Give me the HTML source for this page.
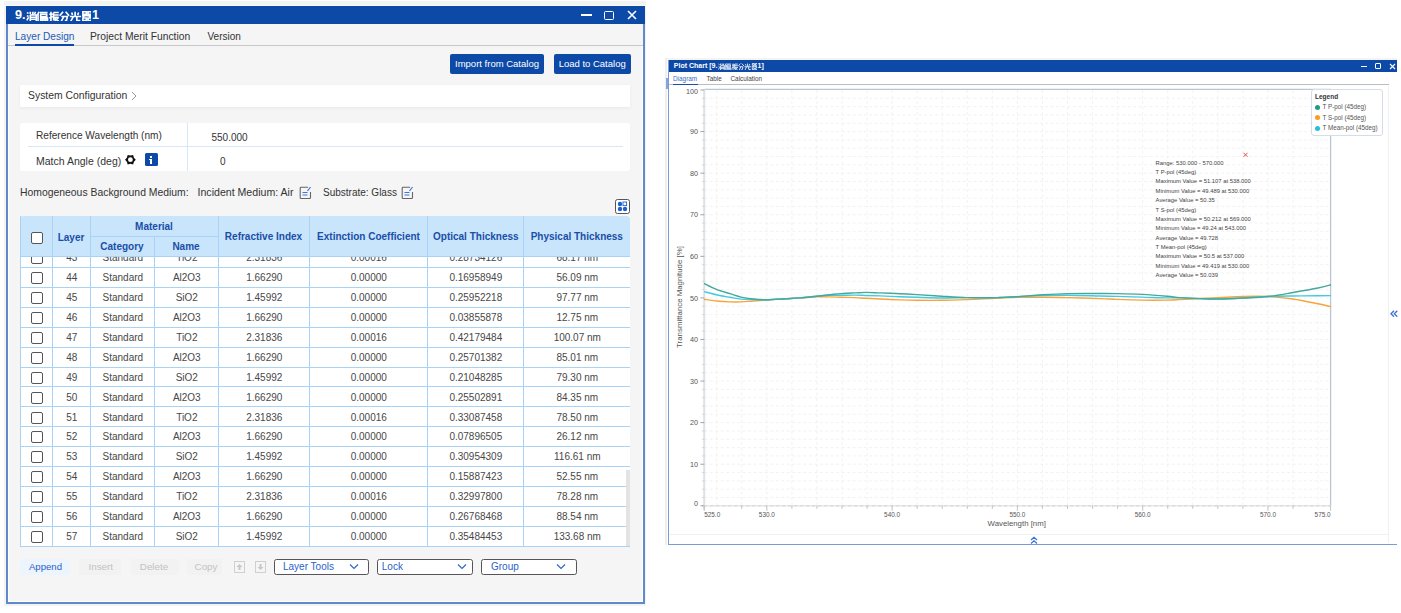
<!DOCTYPE html><html><head><meta charset="utf-8"><style>
*{box-sizing:border-box}
html,body{margin:0;padding:0}
body{width:1401px;height:613px;position:relative;overflow:hidden;background:#fff;font-family:"Liberation Sans",sans-serif;color:#333}
.cb{position:absolute;width:12px;height:12px;border:1.6px solid #555;border-radius:2px;background:#fff}
</style></head><body>
<div style="position:absolute;left:4px;top:1px;width:642px;height:605px;background:#f3f3f3"></div>
<div style="position:absolute;left:4px;top:4.6px;width:642px;height:1px;background:#fafafa"></div>
<div style="position:absolute;left:6px;top:6px;width:639px;height:598.2px;background:#f5f5f5;border:2px solid #6088cc;box-shadow:inset 0 0 0 1px #fff"></div>
<div style="position:absolute;left:6px;top:6px;width:638.5px;height:17.8px;background:#0d4aa8"></div>
<div style="position:absolute;left:15px;top:6.3px;white-space:nowrap;font-weight:bold;font-size:12.6px;line-height:18px;color:#fff">9.</div>
<svg style="position:absolute;left:25.5px;top:10.5px" width="65.5" height="10.2" viewBox="0 0 76 13" preserveAspectRatio="none" fill="none" stroke="#fff" stroke-width="1.9"><path d="M1 2l2 1M1 6l2 1M1 12l2-4M5 1v3M8 1v3M11 1l-1 3M5 5h7v8M5 5v8M5 8h7M5 10.5h7"/><path d="M15 1l-2 5M14 4v9M16 2h9M17 4h7v3h-7zM17 4v9M17 9h8v4M19 9v4M21 9v4M23 9v4"/><path d="M27 4h4M29 1v11l-1 1M27 9l4-2M32 2h6M32 2v10M32 5h6M33 8h5M34 8v5M38 8l-3 3l3 2"/><path d="M43 1l-4 5M46 1l4 5M41 7h7l-1 5h-2M44 7l-3 6"/><path d="M57 1v6M53 2l1 3M61 2l-1 3M51 7h13M55 7l-3 6M59 7v5h4"/><path d="M66 1h4v3h-4zM72 1h4v3h-4zM65 6h11M70 4l-4 4M71 5l4 3M66 9h4v3h-4zM72 9h4v3h-4z"/></svg>
<div style="position:absolute;left:92px;top:6.3px;white-space:nowrap;font-weight:bold;font-size:12.6px;line-height:18px;color:#fff">1</div>
<div style="position:absolute;left:581px;top:14px;width:11px;height:1.6px;background:#fff"></div>
<div style="position:absolute;left:604px;top:10.5px;width:10px;height:9.5px;border:1.6px solid #fff;border-radius:1.5px"></div>
<svg style="position:absolute;left:627px;top:10px" width="10" height="10"><path d="M1 1L9 9M9 1L1 9" stroke="#fff" stroke-width="1.6"/></svg>
<div style="position:absolute;left:7.5px;top:24px;width:635px;height:21.5px;background:#f5f5f5"></div>
<div style="position:absolute;left:7.5px;top:45px;width:635px;height:1px;background:#c9c9c9"></div>
<div style="position:absolute;left:15px;top:30.8px;white-space:nowrap;font-size:10.1px;color:#1f5bb8;line-height:12px">Layer Design</div>
<div style="position:absolute;left:15px;top:44px;width:59px;height:2px;background:#0d4aa8"></div>
<div style="position:absolute;left:90px;top:30.8px;white-space:nowrap;font-size:10.3px;color:#333;line-height:12px">Project Merit Function</div>
<div style="position:absolute;left:207.5px;top:30.8px;white-space:nowrap;font-size:10px;color:#333;line-height:12px">Version</div>
<div style="position:absolute;left:450px;top:54px;width:94px;height:20px;background:#0d4aa8;border-radius:2px"></div>
<div style="position:absolute;left:347px;top:54px;width:300px;height:20px;line-height:20px;text-align:center;white-space:nowrap;font-size:9.5px;color:#fff">Import from Catalog</div>
<div style="position:absolute;left:553.5px;top:54px;width:77.5px;height:20px;background:#0d4aa8;border-radius:2px"></div>
<div style="position:absolute;left:442.20000000000005px;top:54px;width:300px;height:20px;line-height:20px;text-align:center;white-space:nowrap;font-size:9.5px;color:#fff">Load to Catalog</div>
<div style="position:absolute;left:20px;top:85px;width:610px;height:22px;background:#fff;box-shadow:0 1px 3px rgba(0,0,0,0.06)"></div>
<div style="position:absolute;left:28px;top:89px;white-space:nowrap;font-size:10.4px;color:#333;line-height:14px">System Configuration</div>
<svg style="position:absolute;left:131px;top:91px" width="6" height="10"><path d="M1 1l4 4l-4 4" stroke="#999" stroke-width="1" fill="none"/></svg>
<div style="position:absolute;left:20px;top:123px;width:610px;height:47.5px;background:#fff;border-radius:3px"></div>
<div style="position:absolute;left:28px;top:146px;width:594.5px;height:1px;background:#d3e8fb"></div>
<div style="position:absolute;left:186.5px;top:123px;width:1px;height:47.5px;background:#d3e8fb"></div>
<div style="position:absolute;left:36px;top:130px;white-space:nowrap;font-size:10.1px;color:#333;line-height:12px">Reference Wavelength (nm)</div>
<div style="position:absolute;left:211.5px;top:132px;white-space:nowrap;font-size:10px;color:#333;line-height:12px">550.000</div>
<div style="position:absolute;left:36px;top:154.5px;white-space:nowrap;font-size:10.5px;color:#333;line-height:12px">Match Angle (deg)</div>
<div style="position:absolute;left:220px;top:156px;white-space:nowrap;font-size:10px;color:#333;line-height:12px">0</div>
<svg style="position:absolute;left:0;top:0" width="170" height="170"><path d="M135.80 159.70L133.95 161.75L133.10 164.38L130.40 163.80L127.70 164.38L126.85 161.75L125.00 159.70L126.85 157.65L127.70 155.02L130.40 155.60L133.10 155.02L133.95 157.65Z" fill="#111"/><circle cx="130.4" cy="159.7" r="2.4" fill="#fff"/></svg>
<div style="position:absolute;left:145px;top:153.2px;width:12.5px;height:12.7px;background:#0d4aa8;border-radius:1.5px"></div>
<div style="position:absolute;left:150.3px;top:156px;width:2px;height:2px;background:#fff"></div>
<div style="position:absolute;left:150.3px;top:159.3px;width:2px;height:5px;background:#fff"></div>
<div style="position:absolute;left:149.3px;top:159.3px;width:1.2px;height:1px;background:#fff"></div>
<div style="position:absolute;left:20px;top:186px;white-space:nowrap;font-size:10.4px;color:#333;line-height:13px">Homogeneous Background Medium:</div>
<div style="position:absolute;left:197.5px;top:186px;white-space:nowrap;font-size:10.6px;color:#333;line-height:13px">Incident Medium: Air</div>
<svg style="position:absolute;left:299px;top:185.5px" width="13" height="13" viewBox="0 0 13 13" fill="none"><path d="M9 1.2H2.2a1 1 0 0 0-1 1v9.3a1 1 0 0 0 1 1h8.3a1 1 0 0 0 1-1V6" stroke="#666" stroke-width="1.1"/><path d="M3.5 6.5h5M3.5 9h5" stroke="#3a78d8" stroke-width="1.1"/><path d="M8.5 5l3-4" stroke="#3a78d8" stroke-width="1.2"/></svg>
<div style="position:absolute;left:323px;top:186px;white-space:nowrap;font-size:10px;color:#333;line-height:13px">Substrate: Glass</div>
<svg style="position:absolute;left:401px;top:185.5px" width="13" height="13" viewBox="0 0 13 13" fill="none"><path d="M9 1.2H2.2a1 1 0 0 0-1 1v9.3a1 1 0 0 0 1 1h8.3a1 1 0 0 0 1-1V6" stroke="#666" stroke-width="1.1"/><path d="M3.5 6.5h5M3.5 9h5" stroke="#3a78d8" stroke-width="1.1"/><path d="M8.5 5l3-4" stroke="#3a78d8" stroke-width="1.2"/></svg>
<div style="position:absolute;left:614.5px;top:198.5px;width:15px;height:15px;border:1.3px solid #555;border-radius:2.5px;background:#fff"></div>
<svg style="position:absolute;left:614.5px;top:198.5px" width="15" height="15"><circle cx="5" cy="5" r="2.2" fill="#1f5fd0"/><rect x="8" y="3" width="3.6" height="3.6" fill="none" stroke="#1f5fd0" stroke-width="0.9"/><circle cx="5" cy="10" r="2.2" fill="#1f5fd0"/><circle cx="10" cy="10" r="2.2" fill="#1f5fd0"/></svg>
<div style="position:absolute;left:20px;top:216px;width:610px;height:330px;background:#fff"></div>
<div style="position:absolute;left:20px;top:256px;width:610px;height:290px;overflow:hidden">
<div style="position:absolute;left:0px;top:10.999999999999993px;width:610px;height:1px;background:#a9d2f7"></div>
<div class="cb" style="left:10.5px;top:-3.6500000000000066px"></div>
<div style="position:absolute;left:-98.2px;top:-7.650000000000007px;width:300px;height:20px;line-height:20px;text-align:center;white-space:nowrap;font-size:10px;color:#484848">43</div>
<div style="position:absolute;left:-47.2px;top:-7.650000000000007px;width:300px;height:20px;line-height:20px;text-align:center;white-space:nowrap;font-size:10px;color:#484848">Standard</div>
<div style="position:absolute;left:16.80000000000001px;top:-7.650000000000007px;width:300px;height:20px;line-height:20px;text-align:center;white-space:nowrap;font-size:10px;color:#484848">TiO2</div>
<div style="position:absolute;left:94.30000000000001px;top:-7.650000000000007px;width:300px;height:20px;line-height:20px;text-align:center;white-space:nowrap;font-size:10px;color:#484848">2.31836</div>
<div style="position:absolute;left:198.8px;top:-7.650000000000007px;width:300px;height:20px;line-height:20px;text-align:center;white-space:nowrap;font-size:10px;color:#484848">0.00016</div>
<div style="position:absolute;left:305.8px;top:-7.650000000000007px;width:300px;height:20px;line-height:20px;text-align:center;white-space:nowrap;font-size:10px;color:#484848">0.28734126</div>
<div style="position:absolute;left:407.29999999999995px;top:-7.650000000000007px;width:300px;height:20px;line-height:20px;text-align:center;white-space:nowrap;font-size:10px;color:#484848">68.17 nm</div>
<div style="position:absolute;left:0px;top:30.9px;width:610px;height:1px;background:#a9d2f7"></div>
<div class="cb" style="left:10.5px;top:16.25px"></div>
<div style="position:absolute;left:-98.2px;top:12.25px;width:300px;height:20px;line-height:20px;text-align:center;white-space:nowrap;font-size:10px;color:#484848">44</div>
<div style="position:absolute;left:-47.2px;top:12.25px;width:300px;height:20px;line-height:20px;text-align:center;white-space:nowrap;font-size:10px;color:#484848">Standard</div>
<div style="position:absolute;left:16.80000000000001px;top:12.25px;width:300px;height:20px;line-height:20px;text-align:center;white-space:nowrap;font-size:10px;color:#484848">Al2O3</div>
<div style="position:absolute;left:94.30000000000001px;top:12.25px;width:300px;height:20px;line-height:20px;text-align:center;white-space:nowrap;font-size:10px;color:#484848">1.66290</div>
<div style="position:absolute;left:198.8px;top:12.25px;width:300px;height:20px;line-height:20px;text-align:center;white-space:nowrap;font-size:10px;color:#484848">0.00000</div>
<div style="position:absolute;left:305.8px;top:12.25px;width:300px;height:20px;line-height:20px;text-align:center;white-space:nowrap;font-size:10px;color:#484848">0.16958949</div>
<div style="position:absolute;left:407.29999999999995px;top:12.25px;width:300px;height:20px;line-height:20px;text-align:center;white-space:nowrap;font-size:10px;color:#484848">56.09 nm</div>
<div style="position:absolute;left:0px;top:50.799999999999976px;width:610px;height:1px;background:#a9d2f7"></div>
<div class="cb" style="left:10.5px;top:36.14999999999998px"></div>
<div style="position:absolute;left:-98.2px;top:32.14999999999998px;width:300px;height:20px;line-height:20px;text-align:center;white-space:nowrap;font-size:10px;color:#484848">45</div>
<div style="position:absolute;left:-47.2px;top:32.14999999999998px;width:300px;height:20px;line-height:20px;text-align:center;white-space:nowrap;font-size:10px;color:#484848">Standard</div>
<div style="position:absolute;left:16.80000000000001px;top:32.14999999999998px;width:300px;height:20px;line-height:20px;text-align:center;white-space:nowrap;font-size:10px;color:#484848">SiO2</div>
<div style="position:absolute;left:94.30000000000001px;top:32.14999999999998px;width:300px;height:20px;line-height:20px;text-align:center;white-space:nowrap;font-size:10px;color:#484848">1.45992</div>
<div style="position:absolute;left:198.8px;top:32.14999999999998px;width:300px;height:20px;line-height:20px;text-align:center;white-space:nowrap;font-size:10px;color:#484848">0.00000</div>
<div style="position:absolute;left:305.8px;top:32.14999999999998px;width:300px;height:20px;line-height:20px;text-align:center;white-space:nowrap;font-size:10px;color:#484848">0.25952218</div>
<div style="position:absolute;left:407.29999999999995px;top:32.14999999999998px;width:300px;height:20px;line-height:20px;text-align:center;white-space:nowrap;font-size:10px;color:#484848">97.77 nm</div>
<div style="position:absolute;left:0px;top:70.70000000000002px;width:610px;height:1px;background:#a9d2f7"></div>
<div class="cb" style="left:10.5px;top:56.05000000000001px"></div>
<div style="position:absolute;left:-98.2px;top:52.05000000000001px;width:300px;height:20px;line-height:20px;text-align:center;white-space:nowrap;font-size:10px;color:#484848">46</div>
<div style="position:absolute;left:-47.2px;top:52.05000000000001px;width:300px;height:20px;line-height:20px;text-align:center;white-space:nowrap;font-size:10px;color:#484848">Standard</div>
<div style="position:absolute;left:16.80000000000001px;top:52.05000000000001px;width:300px;height:20px;line-height:20px;text-align:center;white-space:nowrap;font-size:10px;color:#484848">Al2O3</div>
<div style="position:absolute;left:94.30000000000001px;top:52.05000000000001px;width:300px;height:20px;line-height:20px;text-align:center;white-space:nowrap;font-size:10px;color:#484848">1.66290</div>
<div style="position:absolute;left:198.8px;top:52.05000000000001px;width:300px;height:20px;line-height:20px;text-align:center;white-space:nowrap;font-size:10px;color:#484848">0.00000</div>
<div style="position:absolute;left:305.8px;top:52.05000000000001px;width:300px;height:20px;line-height:20px;text-align:center;white-space:nowrap;font-size:10px;color:#484848">0.03855878</div>
<div style="position:absolute;left:407.29999999999995px;top:52.05000000000001px;width:300px;height:20px;line-height:20px;text-align:center;white-space:nowrap;font-size:10px;color:#484848">12.75 nm</div>
<div style="position:absolute;left:0px;top:90.6px;width:610px;height:1px;background:#a9d2f7"></div>
<div class="cb" style="left:10.5px;top:75.94999999999999px"></div>
<div style="position:absolute;left:-98.2px;top:71.94999999999999px;width:300px;height:20px;line-height:20px;text-align:center;white-space:nowrap;font-size:10px;color:#484848">47</div>
<div style="position:absolute;left:-47.2px;top:71.94999999999999px;width:300px;height:20px;line-height:20px;text-align:center;white-space:nowrap;font-size:10px;color:#484848">Standard</div>
<div style="position:absolute;left:16.80000000000001px;top:71.94999999999999px;width:300px;height:20px;line-height:20px;text-align:center;white-space:nowrap;font-size:10px;color:#484848">TiO2</div>
<div style="position:absolute;left:94.30000000000001px;top:71.94999999999999px;width:300px;height:20px;line-height:20px;text-align:center;white-space:nowrap;font-size:10px;color:#484848">2.31836</div>
<div style="position:absolute;left:198.8px;top:71.94999999999999px;width:300px;height:20px;line-height:20px;text-align:center;white-space:nowrap;font-size:10px;color:#484848">0.00016</div>
<div style="position:absolute;left:305.8px;top:71.94999999999999px;width:300px;height:20px;line-height:20px;text-align:center;white-space:nowrap;font-size:10px;color:#484848">0.42179484</div>
<div style="position:absolute;left:407.29999999999995px;top:71.94999999999999px;width:300px;height:20px;line-height:20px;text-align:center;white-space:nowrap;font-size:10px;color:#484848">100.07 nm</div>
<div style="position:absolute;left:0px;top:110.50000000000003px;width:610px;height:1px;background:#a9d2f7"></div>
<div class="cb" style="left:10.5px;top:95.85000000000002px"></div>
<div style="position:absolute;left:-98.2px;top:91.85000000000002px;width:300px;height:20px;line-height:20px;text-align:center;white-space:nowrap;font-size:10px;color:#484848">48</div>
<div style="position:absolute;left:-47.2px;top:91.85000000000002px;width:300px;height:20px;line-height:20px;text-align:center;white-space:nowrap;font-size:10px;color:#484848">Standard</div>
<div style="position:absolute;left:16.80000000000001px;top:91.85000000000002px;width:300px;height:20px;line-height:20px;text-align:center;white-space:nowrap;font-size:10px;color:#484848">Al2O3</div>
<div style="position:absolute;left:94.30000000000001px;top:91.85000000000002px;width:300px;height:20px;line-height:20px;text-align:center;white-space:nowrap;font-size:10px;color:#484848">1.66290</div>
<div style="position:absolute;left:198.8px;top:91.85000000000002px;width:300px;height:20px;line-height:20px;text-align:center;white-space:nowrap;font-size:10px;color:#484848">0.00000</div>
<div style="position:absolute;left:305.8px;top:91.85000000000002px;width:300px;height:20px;line-height:20px;text-align:center;white-space:nowrap;font-size:10px;color:#484848">0.25701382</div>
<div style="position:absolute;left:407.29999999999995px;top:91.85000000000002px;width:300px;height:20px;line-height:20px;text-align:center;white-space:nowrap;font-size:10px;color:#484848">85.01 nm</div>
<div style="position:absolute;left:0px;top:130.4px;width:610px;height:1px;background:#a9d2f7"></div>
<div class="cb" style="left:10.5px;top:115.75px"></div>
<div style="position:absolute;left:-98.2px;top:111.75px;width:300px;height:20px;line-height:20px;text-align:center;white-space:nowrap;font-size:10px;color:#484848">49</div>
<div style="position:absolute;left:-47.2px;top:111.75px;width:300px;height:20px;line-height:20px;text-align:center;white-space:nowrap;font-size:10px;color:#484848">Standard</div>
<div style="position:absolute;left:16.80000000000001px;top:111.75px;width:300px;height:20px;line-height:20px;text-align:center;white-space:nowrap;font-size:10px;color:#484848">SiO2</div>
<div style="position:absolute;left:94.30000000000001px;top:111.75px;width:300px;height:20px;line-height:20px;text-align:center;white-space:nowrap;font-size:10px;color:#484848">1.45992</div>
<div style="position:absolute;left:198.8px;top:111.75px;width:300px;height:20px;line-height:20px;text-align:center;white-space:nowrap;font-size:10px;color:#484848">0.00000</div>
<div style="position:absolute;left:305.8px;top:111.75px;width:300px;height:20px;line-height:20px;text-align:center;white-space:nowrap;font-size:10px;color:#484848">0.21048285</div>
<div style="position:absolute;left:407.29999999999995px;top:111.75px;width:300px;height:20px;line-height:20px;text-align:center;white-space:nowrap;font-size:10px;color:#484848">79.30 nm</div>
<div style="position:absolute;left:0px;top:150.29999999999998px;width:610px;height:1px;background:#a9d2f7"></div>
<div class="cb" style="left:10.5px;top:135.64999999999998px"></div>
<div style="position:absolute;left:-98.2px;top:131.64999999999998px;width:300px;height:20px;line-height:20px;text-align:center;white-space:nowrap;font-size:10px;color:#484848">50</div>
<div style="position:absolute;left:-47.2px;top:131.64999999999998px;width:300px;height:20px;line-height:20px;text-align:center;white-space:nowrap;font-size:10px;color:#484848">Standard</div>
<div style="position:absolute;left:16.80000000000001px;top:131.64999999999998px;width:300px;height:20px;line-height:20px;text-align:center;white-space:nowrap;font-size:10px;color:#484848">Al2O3</div>
<div style="position:absolute;left:94.30000000000001px;top:131.64999999999998px;width:300px;height:20px;line-height:20px;text-align:center;white-space:nowrap;font-size:10px;color:#484848">1.66290</div>
<div style="position:absolute;left:198.8px;top:131.64999999999998px;width:300px;height:20px;line-height:20px;text-align:center;white-space:nowrap;font-size:10px;color:#484848">0.00000</div>
<div style="position:absolute;left:305.8px;top:131.64999999999998px;width:300px;height:20px;line-height:20px;text-align:center;white-space:nowrap;font-size:10px;color:#484848">0.25502891</div>
<div style="position:absolute;left:407.29999999999995px;top:131.64999999999998px;width:300px;height:20px;line-height:20px;text-align:center;white-space:nowrap;font-size:10px;color:#484848">84.35 nm</div>
<div style="position:absolute;left:0px;top:170.19999999999996px;width:610px;height:1px;background:#a9d2f7"></div>
<div class="cb" style="left:10.5px;top:155.54999999999995px"></div>
<div style="position:absolute;left:-98.2px;top:151.54999999999995px;width:300px;height:20px;line-height:20px;text-align:center;white-space:nowrap;font-size:10px;color:#484848">51</div>
<div style="position:absolute;left:-47.2px;top:151.54999999999995px;width:300px;height:20px;line-height:20px;text-align:center;white-space:nowrap;font-size:10px;color:#484848">Standard</div>
<div style="position:absolute;left:16.80000000000001px;top:151.54999999999995px;width:300px;height:20px;line-height:20px;text-align:center;white-space:nowrap;font-size:10px;color:#484848">TiO2</div>
<div style="position:absolute;left:94.30000000000001px;top:151.54999999999995px;width:300px;height:20px;line-height:20px;text-align:center;white-space:nowrap;font-size:10px;color:#484848">2.31836</div>
<div style="position:absolute;left:198.8px;top:151.54999999999995px;width:300px;height:20px;line-height:20px;text-align:center;white-space:nowrap;font-size:10px;color:#484848">0.00016</div>
<div style="position:absolute;left:305.8px;top:151.54999999999995px;width:300px;height:20px;line-height:20px;text-align:center;white-space:nowrap;font-size:10px;color:#484848">0.33087458</div>
<div style="position:absolute;left:407.29999999999995px;top:151.54999999999995px;width:300px;height:20px;line-height:20px;text-align:center;white-space:nowrap;font-size:10px;color:#484848">78.50 nm</div>
<div style="position:absolute;left:0px;top:190.1px;width:610px;height:1px;background:#a9d2f7"></div>
<div class="cb" style="left:10.5px;top:175.45px"></div>
<div style="position:absolute;left:-98.2px;top:171.45px;width:300px;height:20px;line-height:20px;text-align:center;white-space:nowrap;font-size:10px;color:#484848">52</div>
<div style="position:absolute;left:-47.2px;top:171.45px;width:300px;height:20px;line-height:20px;text-align:center;white-space:nowrap;font-size:10px;color:#484848">Standard</div>
<div style="position:absolute;left:16.80000000000001px;top:171.45px;width:300px;height:20px;line-height:20px;text-align:center;white-space:nowrap;font-size:10px;color:#484848">Al2O3</div>
<div style="position:absolute;left:94.30000000000001px;top:171.45px;width:300px;height:20px;line-height:20px;text-align:center;white-space:nowrap;font-size:10px;color:#484848">1.66290</div>
<div style="position:absolute;left:198.8px;top:171.45px;width:300px;height:20px;line-height:20px;text-align:center;white-space:nowrap;font-size:10px;color:#484848">0.00000</div>
<div style="position:absolute;left:305.8px;top:171.45px;width:300px;height:20px;line-height:20px;text-align:center;white-space:nowrap;font-size:10px;color:#484848">0.07896505</div>
<div style="position:absolute;left:407.29999999999995px;top:171.45px;width:300px;height:20px;line-height:20px;text-align:center;white-space:nowrap;font-size:10px;color:#484848">26.12 nm</div>
<div style="position:absolute;left:0px;top:210.00000000000003px;width:610px;height:1px;background:#a9d2f7"></div>
<div class="cb" style="left:10.5px;top:195.35000000000002px"></div>
<div style="position:absolute;left:-98.2px;top:191.35000000000002px;width:300px;height:20px;line-height:20px;text-align:center;white-space:nowrap;font-size:10px;color:#484848">53</div>
<div style="position:absolute;left:-47.2px;top:191.35000000000002px;width:300px;height:20px;line-height:20px;text-align:center;white-space:nowrap;font-size:10px;color:#484848">Standard</div>
<div style="position:absolute;left:16.80000000000001px;top:191.35000000000002px;width:300px;height:20px;line-height:20px;text-align:center;white-space:nowrap;font-size:10px;color:#484848">SiO2</div>
<div style="position:absolute;left:94.30000000000001px;top:191.35000000000002px;width:300px;height:20px;line-height:20px;text-align:center;white-space:nowrap;font-size:10px;color:#484848">1.45992</div>
<div style="position:absolute;left:198.8px;top:191.35000000000002px;width:300px;height:20px;line-height:20px;text-align:center;white-space:nowrap;font-size:10px;color:#484848">0.00000</div>
<div style="position:absolute;left:305.8px;top:191.35000000000002px;width:300px;height:20px;line-height:20px;text-align:center;white-space:nowrap;font-size:10px;color:#484848">0.30954309</div>
<div style="position:absolute;left:407.29999999999995px;top:191.35000000000002px;width:300px;height:20px;line-height:20px;text-align:center;white-space:nowrap;font-size:10px;color:#484848">116.61 nm</div>
<div style="position:absolute;left:0px;top:229.9px;width:610px;height:1px;background:#a9d2f7"></div>
<div class="cb" style="left:10.5px;top:215.25px"></div>
<div style="position:absolute;left:-98.2px;top:211.25px;width:300px;height:20px;line-height:20px;text-align:center;white-space:nowrap;font-size:10px;color:#484848">54</div>
<div style="position:absolute;left:-47.2px;top:211.25px;width:300px;height:20px;line-height:20px;text-align:center;white-space:nowrap;font-size:10px;color:#484848">Standard</div>
<div style="position:absolute;left:16.80000000000001px;top:211.25px;width:300px;height:20px;line-height:20px;text-align:center;white-space:nowrap;font-size:10px;color:#484848">Al2O3</div>
<div style="position:absolute;left:94.30000000000001px;top:211.25px;width:300px;height:20px;line-height:20px;text-align:center;white-space:nowrap;font-size:10px;color:#484848">1.66290</div>
<div style="position:absolute;left:198.8px;top:211.25px;width:300px;height:20px;line-height:20px;text-align:center;white-space:nowrap;font-size:10px;color:#484848">0.00000</div>
<div style="position:absolute;left:305.8px;top:211.25px;width:300px;height:20px;line-height:20px;text-align:center;white-space:nowrap;font-size:10px;color:#484848">0.15887423</div>
<div style="position:absolute;left:407.29999999999995px;top:211.25px;width:300px;height:20px;line-height:20px;text-align:center;white-space:nowrap;font-size:10px;color:#484848">52.55 nm</div>
<div style="position:absolute;left:0px;top:249.79999999999998px;width:610px;height:1px;background:#a9d2f7"></div>
<div class="cb" style="left:10.5px;top:235.14999999999998px"></div>
<div style="position:absolute;left:-98.2px;top:231.14999999999998px;width:300px;height:20px;line-height:20px;text-align:center;white-space:nowrap;font-size:10px;color:#484848">55</div>
<div style="position:absolute;left:-47.2px;top:231.14999999999998px;width:300px;height:20px;line-height:20px;text-align:center;white-space:nowrap;font-size:10px;color:#484848">Standard</div>
<div style="position:absolute;left:16.80000000000001px;top:231.14999999999998px;width:300px;height:20px;line-height:20px;text-align:center;white-space:nowrap;font-size:10px;color:#484848">TiO2</div>
<div style="position:absolute;left:94.30000000000001px;top:231.14999999999998px;width:300px;height:20px;line-height:20px;text-align:center;white-space:nowrap;font-size:10px;color:#484848">2.31836</div>
<div style="position:absolute;left:198.8px;top:231.14999999999998px;width:300px;height:20px;line-height:20px;text-align:center;white-space:nowrap;font-size:10px;color:#484848">0.00016</div>
<div style="position:absolute;left:305.8px;top:231.14999999999998px;width:300px;height:20px;line-height:20px;text-align:center;white-space:nowrap;font-size:10px;color:#484848">0.32997800</div>
<div style="position:absolute;left:407.29999999999995px;top:231.14999999999998px;width:300px;height:20px;line-height:20px;text-align:center;white-space:nowrap;font-size:10px;color:#484848">78.28 nm</div>
<div style="position:absolute;left:0px;top:269.69999999999993px;width:610px;height:1px;background:#a9d2f7"></div>
<div class="cb" style="left:10.5px;top:255.04999999999995px"></div>
<div style="position:absolute;left:-98.2px;top:251.04999999999995px;width:300px;height:20px;line-height:20px;text-align:center;white-space:nowrap;font-size:10px;color:#484848">56</div>
<div style="position:absolute;left:-47.2px;top:251.04999999999995px;width:300px;height:20px;line-height:20px;text-align:center;white-space:nowrap;font-size:10px;color:#484848">Standard</div>
<div style="position:absolute;left:16.80000000000001px;top:251.04999999999995px;width:300px;height:20px;line-height:20px;text-align:center;white-space:nowrap;font-size:10px;color:#484848">Al2O3</div>
<div style="position:absolute;left:94.30000000000001px;top:251.04999999999995px;width:300px;height:20px;line-height:20px;text-align:center;white-space:nowrap;font-size:10px;color:#484848">1.66290</div>
<div style="position:absolute;left:198.8px;top:251.04999999999995px;width:300px;height:20px;line-height:20px;text-align:center;white-space:nowrap;font-size:10px;color:#484848">0.00000</div>
<div style="position:absolute;left:305.8px;top:251.04999999999995px;width:300px;height:20px;line-height:20px;text-align:center;white-space:nowrap;font-size:10px;color:#484848">0.26768468</div>
<div style="position:absolute;left:407.29999999999995px;top:251.04999999999995px;width:300px;height:20px;line-height:20px;text-align:center;white-space:nowrap;font-size:10px;color:#484848">88.54 nm</div>
<div style="position:absolute;left:0px;top:289.6px;width:610px;height:1px;background:#a9d2f7"></div>
<div class="cb" style="left:10.5px;top:274.95000000000005px"></div>
<div style="position:absolute;left:-98.2px;top:270.95000000000005px;width:300px;height:20px;line-height:20px;text-align:center;white-space:nowrap;font-size:10px;color:#484848">57</div>
<div style="position:absolute;left:-47.2px;top:270.95000000000005px;width:300px;height:20px;line-height:20px;text-align:center;white-space:nowrap;font-size:10px;color:#484848">Standard</div>
<div style="position:absolute;left:16.80000000000001px;top:270.95000000000005px;width:300px;height:20px;line-height:20px;text-align:center;white-space:nowrap;font-size:10px;color:#484848">SiO2</div>
<div style="position:absolute;left:94.30000000000001px;top:270.95000000000005px;width:300px;height:20px;line-height:20px;text-align:center;white-space:nowrap;font-size:10px;color:#484848">1.45992</div>
<div style="position:absolute;left:198.8px;top:270.95000000000005px;width:300px;height:20px;line-height:20px;text-align:center;white-space:nowrap;font-size:10px;color:#484848">0.00000</div>
<div style="position:absolute;left:305.8px;top:270.95000000000005px;width:300px;height:20px;line-height:20px;text-align:center;white-space:nowrap;font-size:10px;color:#484848">0.35484453</div>
<div style="position:absolute;left:407.29999999999995px;top:270.95000000000005px;width:300px;height:20px;line-height:20px;text-align:center;white-space:nowrap;font-size:10px;color:#484848">133.68 nm</div>
</div>
<div style="position:absolute;left:20px;top:216px;width:610px;height:40px;background:#c8e5fb;border-radius:3px 3px 0 0"></div>
<div style="position:absolute;left:20px;top:255.5px;width:610px;height:1.2px;background:#a9d2f7"></div>
<div style="position:absolute;left:90px;top:235.5px;width:128px;height:1px;background:#a9d2f7"></div>
<div style="position:absolute;left:52px;top:216px;width:1px;height:330px;background:#a9d2f7"></div>
<div style="position:absolute;left:90px;top:216px;width:1px;height:330px;background:#a9d2f7"></div>
<div style="position:absolute;left:154px;top:235.5px;width:1px;height:310.5px;background:#a9d2f7"></div>
<div style="position:absolute;left:218px;top:216px;width:1px;height:330px;background:#a9d2f7"></div>
<div style="position:absolute;left:309px;top:216px;width:1px;height:330px;background:#a9d2f7"></div>
<div style="position:absolute;left:427px;top:216px;width:1px;height:330px;background:#a9d2f7"></div>
<div style="position:absolute;left:523px;top:216px;width:1px;height:330px;background:#a9d2f7"></div>
<div style="position:absolute;left:20px;top:216px;width:1px;height:330px;background:#a9d2f7"></div>
<div style="position:absolute;left:20px;top:545.5px;width:610px;height:1px;background:#a9d2f7"></div>
<div class="cb" style="left:30.5px;top:231.5px"></div>
<div style="position:absolute;left:-79px;top:228px;width:300px;height:20px;line-height:20px;text-align:center;white-space:nowrap;font-size:10px;font-weight:bold;color:#1a4ea8">Layer</div>
<div style="position:absolute;left:4px;top:216.5px;width:300px;height:20px;line-height:20px;text-align:center;white-space:nowrap;font-size:10px;font-weight:bold;color:#1a4ea8">Material</div>
<div style="position:absolute;left:-28px;top:236.5px;width:300px;height:20px;line-height:20px;text-align:center;white-space:nowrap;font-size:10px;font-weight:bold;color:#1a4ea8">Category</div>
<div style="position:absolute;left:36px;top:236.5px;width:300px;height:20px;line-height:20px;text-align:center;white-space:nowrap;font-size:10px;font-weight:bold;color:#1a4ea8">Name</div>
<div style="position:absolute;left:113.5px;top:227px;width:300px;height:20px;line-height:20px;text-align:center;white-space:nowrap;font-size:10px;font-weight:bold;color:#1a4ea8">Refractive Index</div>
<div style="position:absolute;left:218.5px;top:227px;width:300px;height:20px;line-height:20px;text-align:center;white-space:nowrap;font-size:10px;font-weight:bold;color:#1a4ea8">Extinction Coefficient</div>
<div style="position:absolute;left:325.8px;top:227px;width:300px;height:20px;line-height:20px;text-align:center;white-space:nowrap;font-size:10px;font-weight:bold;color:#1a4ea8">Optical Thickness</div>
<div style="position:absolute;left:426.79999999999995px;top:227px;width:300px;height:20px;line-height:20px;text-align:center;white-space:nowrap;font-size:10px;font-weight:bold;color:#1a4ea8">Physical Thickness</div>
<div style="position:absolute;left:625.5px;top:469.5px;width:4.5px;height:76px;background:#e3e3e3"></div>
<div style="position:absolute;left:19.5px;top:559px;width:50.5px;height:15.5px;background:#ecf4fd;border-radius:2px"></div>
<div style="position:absolute;left:-104.5px;top:556.5px;width:300px;height:20px;line-height:20px;text-align:center;white-space:nowrap;font-size:9.6px;color:#2a62c9">Append</div>
<div style="position:absolute;left:79px;top:559px;width:42px;height:15.5px;background:#f2f2f2;border-radius:2px"></div>
<div style="position:absolute;left:131px;top:559px;width:48px;height:15.5px;background:#f2f2f2;border-radius:2px"></div>
<div style="position:absolute;left:187px;top:559px;width:35px;height:15.5px;background:#f2f2f2;border-radius:2px"></div>
<div style="position:absolute;left:-49.2px;top:556.5px;width:300px;height:20px;line-height:20px;text-align:center;white-space:nowrap;font-size:9.8px;color:#c2c2c2">Insert</div>
<div style="position:absolute;left:4px;top:556.5px;width:300px;height:20px;line-height:20px;text-align:center;white-space:nowrap;font-size:9.8px;color:#c2c2c2">Delete</div>
<div style="position:absolute;left:56px;top:556.5px;width:300px;height:20px;line-height:20px;text-align:center;white-space:nowrap;font-size:9.8px;color:#c2c2c2">Copy</div>
<svg style="position:absolute;left:233.5px;top:560.5px" width="11" height="12" viewBox="0 0 11 12"><rect x="0.5" y="0.5" width="10" height="11" fill="none" stroke="#d0d0d0"/><path d="M5.5 3l-3 3h2v3h2V6h2z" fill="#c8c8c8"/></svg>
<svg style="position:absolute;left:254.5px;top:560.5px" width="11" height="12" viewBox="0 0 11 12"><rect x="0.5" y="0.5" width="10" height="11" fill="none" stroke="#d0d0d0"/><path d="M5.5 9l-3-3h2V3h2v3h2z" fill="#c8c8c8"/></svg>
<div style="position:absolute;left:273.5px;top:558.5px;width:95.5px;height:16px;border:1.2px solid #555;border-radius:2.5px;background:#fff"></div><div style="position:absolute;left:283.0px;top:561px;white-space:nowrap;font-size:10px;color:#2a62c9;line-height:12px">Layer Tools</div><svg style="position:absolute;left:348.6px;top:563px" width="10" height="7"><path d="M1 1.5l4 4l4-4" stroke="#2a62c9" stroke-width="1.1" fill="none"/></svg>
<div style="position:absolute;left:377px;top:558.5px;width:95.5px;height:16px;border:1.2px solid #555;border-radius:2.5px;background:#fff"></div><div style="position:absolute;left:381.8px;top:561px;white-space:nowrap;font-size:10px;color:#2a62c9;line-height:12px">Lock</div><svg style="position:absolute;left:457.2px;top:563px" width="10" height="7"><path d="M1 1.5l4 4l4-4" stroke="#2a62c9" stroke-width="1.1" fill="none"/></svg>
<div style="position:absolute;left:481px;top:558.5px;width:95.5px;height:16px;border:1.2px solid #555;border-radius:2.5px;background:#fff"></div><div style="position:absolute;left:491px;top:561px;white-space:nowrap;font-size:10px;color:#2a62c9;line-height:12px">Group</div><svg style="position:absolute;left:556px;top:563px" width="10" height="7"><path d="M1 1.5l4 4l4-4" stroke="#2a62c9" stroke-width="1.1" fill="none"/></svg>
<div style="position:absolute;left:666px;top:58px;width:731px;height:3px;background:#f4f4f4"></div>
<div style="position:absolute;left:665.3px;top:58px;width:2.2px;height:487px;background:#efefef"></div>
<div style="position:absolute;left:668px;top:60.3px;width:729px;height:484.7px;background:#fff"></div>
<div style="position:absolute;left:668px;top:60.3px;width:729px;height:11.3px;background:#0d4aa8"></div>
<div style="position:absolute;left:667.5px;top:60.3px;width:1.3px;height:484.5px;background:#7a9bd6"></div>
<div style="position:absolute;left:667.5px;top:543.8px;width:729.5px;height:1.3px;background:#7a9bd6"></div>
<div style="position:absolute;left:665.8px;top:78px;width:1.8px;height:10.5px;background:#8aa4d8"></div>
<div style="position:absolute;left:673.8px;top:61px;white-space:nowrap;font-weight:bold;font-size:7px;line-height:10.6px;color:#fff">Plot Chart [9.</div>
<svg style="position:absolute;left:717.8px;top:62.8px" width="39.5" height="7" viewBox="0 0 76 13" preserveAspectRatio="none" fill="none" stroke="#fff" stroke-width="1.6"><path d="M1 2l2 1M1 6l2 1M1 12l2-4M5 1v3M8 1v3M11 1l-1 3M5 5h7v8M5 5v8M5 8h7M5 10.5h7"/><path d="M15 1l-2 5M14 4v9M16 2h9M17 4h7v3h-7zM17 4v9M17 9h8v4M19 9v4M21 9v4M23 9v4"/><path d="M27 4h4M29 1v11l-1 1M27 9l4-2M32 2h6M32 2v10M32 5h6M33 8h5M34 8v5M38 8l-3 3l3 2"/><path d="M43 1l-4 5M46 1l4 5M41 7h7l-1 5h-2M44 7l-3 6"/><path d="M57 1v6M53 2l1 3M61 2l-1 3M51 7h13M55 7l-3 6M59 7v5h4"/><path d="M66 1h4v3h-4zM72 1h4v3h-4zM65 6h11M70 4l-4 4M71 5l4 3M66 9h4v3h-4zM72 9h4v3h-4z"/></svg>
<div style="position:absolute;left:757.6px;top:61px;white-space:nowrap;font-weight:bold;font-size:7px;line-height:10.6px;color:#fff">1]</div>
<div style="position:absolute;left:1360.7px;top:65.5px;width:6px;height:1.2px;background:#fff"></div>
<div style="position:absolute;left:1374.8px;top:62.8px;width:6.2px;height:6.4px;border:1.1px solid #fff;border-radius:1px"></div>
<svg style="position:absolute;left:1388.5px;top:62.5px" width="7" height="7"><path d="M1 1L6 6M6 1L1 6" stroke="#fff" stroke-width="1.1"/></svg>
<div style="position:absolute;left:673px;top:74.6px;white-space:nowrap;font-size:6.4px;color:#3b6cc4;line-height:8px">Diagram</div>
<div style="position:absolute;left:706.5px;top:74.6px;white-space:nowrap;font-size:6.4px;color:#444;line-height:8px">Table</div>
<div style="position:absolute;left:730.5px;top:74.6px;white-space:nowrap;font-size:6.4px;color:#444;line-height:8px">Calculation</div>
<div style="position:absolute;left:669px;top:84px;width:720px;height:0.9px;background:#bdbdbd"></div>
<div style="position:absolute;left:673px;top:83.8px;width:24.5px;height:1.6px;background:#1a4ea8"></div>
<div style="position:absolute;left:1388.4px;top:86px;width:0.8px;height:457px;background:#f0f0f0"></div>
<div style="position:absolute;left:669px;top:534px;width:720px;height:0.8px;background:#f0f0f0"></div>
<svg style="position:absolute;left:0;top:0" width="1401" height="613" viewBox="0 0 1401 613">
<path d="M704.2 497.48H1330.6M704.2 489.17H1330.6M704.2 480.85H1330.6M704.2 472.54H1330.6M704.2 464.22H1330.6M704.2 455.90H1330.6M704.2 447.59H1330.6M704.2 439.27H1330.6M704.2 430.96H1330.6M704.2 422.64H1330.6M704.2 414.32H1330.6M704.2 406.01H1330.6M704.2 397.69H1330.6M704.2 389.38H1330.6M704.2 381.06H1330.6M704.2 372.74H1330.6M704.2 364.43H1330.6M704.2 356.11H1330.6M704.2 347.80H1330.6M704.2 339.48H1330.6M704.2 331.16H1330.6M704.2 322.85H1330.6M704.2 314.53H1330.6M704.2 306.22H1330.6M704.2 297.90H1330.6M704.2 289.58H1330.6M704.2 281.27H1330.6M704.2 272.95H1330.6M704.2 264.64H1330.6M704.2 256.32H1330.6M704.2 248.00H1330.6M704.2 239.69H1330.6M704.2 231.37H1330.6M704.2 223.06H1330.6M704.2 214.74H1330.6M704.2 206.42H1330.6M704.2 198.11H1330.6M704.2 189.79H1330.6M704.2 181.48H1330.6M704.2 173.16H1330.6M704.2 164.84H1330.6M704.2 156.53H1330.6M704.2 148.21H1330.6M704.2 139.90H1330.6M704.2 131.58H1330.6M704.2 123.26H1330.6M704.2 114.95H1330.6M704.2 106.63H1330.6M704.2 98.32H1330.6" stroke="#efefef" stroke-width="0.8" stroke-dasharray="3 2.5" fill="none"/>
<path d="M716.73 90.0V505.8M741.78 90.0V505.8M766.84 90.0V505.8M791.90 90.0V505.8M816.95 90.0V505.8M842.01 90.0V505.8M867.06 90.0V505.8M892.12 90.0V505.8M917.18 90.0V505.8M942.23 90.0V505.8M967.29 90.0V505.8M992.34 90.0V505.8M1017.40 90.0V505.8M1042.46 90.0V505.8M1067.51 90.0V505.8M1092.57 90.0V505.8M1117.62 90.0V505.8M1142.68 90.0V505.8M1167.74 90.0V505.8M1192.79 90.0V505.8M1217.85 90.0V505.8M1242.90 90.0V505.8M1267.96 90.0V505.8M1293.02 90.0V505.8M1318.07 90.0V505.8" stroke="#efefef" stroke-width="0.8" stroke-dasharray="3 2.5" fill="none"/>
<path d="M704.2 89.4H1330.6V505.8" stroke="#b9c6d3" stroke-width="1.3" fill="none"/>
<path d="M704.2 89.0V509.8" stroke="#dde1e7" stroke-width="2" fill="none"/>
<path d="M702.2 505.8H1330.6" stroke="#e2e2e2" stroke-width="1.3" fill="none"/>
<path d="M704.2 505.8H1330.6" stroke="#d2d2d2" stroke-width="0.9" fill="none" stroke-dasharray="3 3"/>
<path d="M700.4000000000001 505.80H704.2M700.4000000000001 464.22H704.2M700.4000000000001 422.64H704.2M700.4000000000001 381.06H704.2M700.4000000000001 339.48H704.2M700.4000000000001 297.90H704.2M700.4000000000001 256.32H704.2M700.4000000000001 214.74H704.2M700.4000000000001 173.16H704.2M700.4000000000001 131.58H704.2M700.4000000000001 90.00H704.2" stroke="#9a9a9a" stroke-width="0.9" fill="none"/>
<path d="M702.0 497.48H704.2M702.0 489.17H704.2M702.0 480.85H704.2M702.0 472.54H704.2M702.0 455.90H704.2M702.0 447.59H704.2M702.0 439.27H704.2M702.0 430.96H704.2M702.0 414.32H704.2M702.0 406.01H704.2M702.0 397.69H704.2M702.0 389.38H704.2M702.0 372.74H704.2M702.0 364.43H704.2M702.0 356.11H704.2M702.0 347.80H704.2M702.0 331.16H704.2M702.0 322.85H704.2M702.0 314.53H704.2M702.0 306.22H704.2M702.0 289.58H704.2M702.0 281.27H704.2M702.0 272.95H704.2M702.0 264.64H704.2M702.0 248.00H704.2M702.0 239.69H704.2M702.0 231.37H704.2M702.0 223.06H704.2M702.0 206.42H704.2M702.0 198.11H704.2M702.0 189.79H704.2M702.0 181.48H704.2M702.0 164.84H704.2M702.0 156.53H704.2M702.0 148.21H704.2M702.0 139.90H704.2M702.0 123.26H704.2M702.0 114.95H704.2M702.0 106.63H704.2M702.0 98.32H704.2" stroke="#cfcfcf" stroke-width="0.8" fill="none"/>
<path d="M704.20 505.8V510.8M766.84 505.8V510.8M892.12 505.8V510.8M1017.40 505.8V510.8M1142.68 505.8V510.8M1267.96 505.8V510.8M1330.60 505.8V510.8M741.78 505.8V508.8M791.90 505.8V508.8M816.95 505.8V508.8M842.01 505.8V508.8M867.06 505.8V508.8M917.18 505.8V508.8M942.23 505.8V508.8M967.29 505.8V508.8M992.34 505.8V508.8M1042.46 505.8V508.8M1067.51 505.8V508.8M1092.57 505.8V508.8M1117.62 505.8V508.8M1167.74 505.8V508.8M1192.79 505.8V508.8M1217.85 505.8V508.8M1242.90 505.8V508.8M1293.02 505.8V508.8" stroke="#bbb" stroke-width="0.9" fill="none"/>
</svg>
<div style="position:absolute;left:670px;top:498.80px;width:28px;height:10px;line-height:10px;text-align:right;font-size:7.2px;color:#555">0</div>
<div style="position:absolute;left:670px;top:459.82px;width:28px;height:10px;line-height:10px;text-align:right;font-size:7.2px;color:#555">10</div>
<div style="position:absolute;left:670px;top:418.24px;width:28px;height:10px;line-height:10px;text-align:right;font-size:7.2px;color:#555">20</div>
<div style="position:absolute;left:670px;top:376.66px;width:28px;height:10px;line-height:10px;text-align:right;font-size:7.2px;color:#555">30</div>
<div style="position:absolute;left:670px;top:335.08px;width:28px;height:10px;line-height:10px;text-align:right;font-size:7.2px;color:#555">40</div>
<div style="position:absolute;left:670px;top:293.50px;width:28px;height:10px;line-height:10px;text-align:right;font-size:7.2px;color:#555">50</div>
<div style="position:absolute;left:670px;top:251.92px;width:28px;height:10px;line-height:10px;text-align:right;font-size:7.2px;color:#555">60</div>
<div style="position:absolute;left:670px;top:210.34px;width:28px;height:10px;line-height:10px;text-align:right;font-size:7.2px;color:#555">70</div>
<div style="position:absolute;left:670px;top:168.76px;width:28px;height:10px;line-height:10px;text-align:right;font-size:7.2px;color:#555">80</div>
<div style="position:absolute;left:670px;top:127.18px;width:28px;height:10px;line-height:10px;text-align:right;font-size:7.2px;color:#555">90</div>
<div style="position:absolute;left:670px;top:86.50px;width:28px;height:10px;line-height:10px;text-align:right;font-size:7.2px;color:#555">100</div>
<div style="position:absolute;left:704.2px;top:509.5px;white-space:nowrap;font-size:6.4px;color:#555;line-height:10px">525.0</div>
<div style="position:absolute;left:616.84px;top:504.5px;width:300px;height:20px;line-height:20px;text-align:center;white-space:nowrap;font-size:6.4px;color:#555">530.0</div>
<div style="position:absolute;left:742.12px;top:504.5px;width:300px;height:20px;line-height:20px;text-align:center;white-space:nowrap;font-size:6.4px;color:#555">540.0</div>
<div style="position:absolute;left:867.4px;top:504.5px;width:300px;height:20px;line-height:20px;text-align:center;white-space:nowrap;font-size:6.4px;color:#555">550.0</div>
<div style="position:absolute;left:992.6799999999998px;top:504.5px;width:300px;height:20px;line-height:20px;text-align:center;white-space:nowrap;font-size:6.4px;color:#555">560.0</div>
<div style="position:absolute;left:1117.96px;top:504.5px;width:300px;height:20px;line-height:20px;text-align:center;white-space:nowrap;font-size:6.4px;color:#555">570.0</div>
<div style="position:absolute;left:1290.60px;top:509.5px;width:40px;text-align:right;font-size:6.4px;color:#555;line-height:10px">575.0</div>
<div style="position:absolute;left:866.7px;top:513.7px;width:300px;height:20px;line-height:20px;text-align:center;white-space:nowrap;font-size:7.8px;color:#555">Wavelength [nm]</div>
<div style="position:absolute;left:619.8px;top:291.8px;width:120px;height:10px;line-height:10px;text-align:center;font-size:7.85px;color:#555;transform:rotate(-90deg)">Transmittance Magnitude [%]</div>
<svg style="position:absolute;left:0;top:0" width="1401" height="613"><path d="M704 299.3C706.08 299.58 712.17 300.57 716.5 301C720.83 301.43 725.92 301.75 730 301.9C734.08 302.05 737.17 302.05 741 301.9C744.83 301.75 748.83 301.30 753 301C757.17 300.70 760.50 300.50 766 300.1C771.50 299.70 780.33 298.97 786 298.6C791.67 298.23 794.90 298.18 800 297.9C805.10 297.62 811.60 297.07 816.6 296.9C821.60 296.73 825.93 296.83 830 296.9C834.07 296.97 836.83 297.18 841 297.3C845.17 297.42 850.83 297.43 855 297.6C859.17 297.77 861.83 298.07 866 298.3C870.17 298.53 874.33 298.73 880 299C885.67 299.27 893.83 299.68 900 299.9C906.17 300.12 910.08 300.23 917 300.3C923.92 300.37 933.17 300.42 941.5 300.3C949.83 300.18 958.92 299.88 967 299.6C975.08 299.32 984.50 298.85 990 298.6C995.50 298.35 995.50 298.32 1000 298.1C1004.50 297.88 1010.00 297.43 1017 297.3C1024.00 297.17 1033.67 297.25 1042 297.3C1050.33 297.35 1057.33 297.38 1067 297.6C1076.67 297.82 1091.67 298.30 1100 298.6C1108.33 298.90 1110.00 299.15 1117 299.4C1124.00 299.65 1133.67 299.98 1142 300.1C1150.33 300.22 1160.67 300.18 1167 300.1C1173.33 300.02 1174.50 299.87 1180 299.6C1185.50 299.33 1193.67 298.80 1200 298.5C1206.33 298.20 1210.83 298.13 1218 297.8C1225.17 297.47 1234.67 296.72 1243 296.5C1251.33 296.28 1259.67 296.08 1268 296.5C1276.33 296.92 1284.67 297.78 1293 299C1301.33 300.22 1311.67 302.50 1318 303.8C1324.33 305.10 1328.83 306.30 1331 306.8" stroke="#f7a43b" stroke-width="1.4" fill="none"/><path d="M704 291.6C706.08 292.13 712.17 293.85 716.5 294.8C720.83 295.75 725.92 296.58 730 297.3C734.08 298.02 737.17 298.72 741 299.1C744.83 299.48 748.83 299.48 753 299.6C757.17 299.72 760.50 299.95 766 299.8C771.50 299.65 780.33 299.02 786 298.7C791.67 298.38 794.90 298.32 800 297.9C805.10 297.48 811.60 296.63 816.6 296.2C821.60 295.77 825.93 295.45 830 295.3C834.07 295.15 836.83 295.33 841 295.3C845.17 295.27 850.83 295.07 855 295.1C859.17 295.13 861.83 295.37 866 295.5C870.17 295.63 874.33 295.70 880 295.9C885.67 296.10 893.83 296.47 900 296.7C906.17 296.93 910.08 297.08 917 297.3C923.92 297.52 933.17 297.95 941.5 298C949.83 298.05 958.92 297.63 967 297.6C975.08 297.57 984.50 297.82 990 297.8C995.50 297.78 995.50 297.68 1000 297.5C1004.50 297.32 1010.00 297.03 1017 296.7C1024.00 296.37 1033.67 295.73 1042 295.5C1050.33 295.27 1057.33 295.22 1067 295.3C1076.67 295.38 1091.67 295.82 1100 296C1108.33 296.18 1110.00 296.22 1117 296.4C1124.00 296.58 1133.67 296.85 1142 297.1C1150.33 297.35 1160.67 297.78 1167 297.9C1173.33 298.02 1174.50 297.68 1180 297.8C1185.50 297.92 1193.67 298.40 1200 298.6C1206.33 298.80 1210.83 299.10 1218 299C1225.17 298.90 1234.67 298.42 1243 298C1251.33 297.58 1259.67 296.83 1268 296.5C1276.33 296.17 1284.67 296.12 1293 296C1301.33 295.88 1311.67 295.87 1318 295.8C1324.33 295.73 1328.83 295.63 1331 295.6" stroke="#45c9e1" stroke-width="1.4" fill="none"/><path d="M704 283.4C706.08 284.40 712.17 287.68 716.5 289.4C720.83 291.12 725.92 292.42 730 293.7C734.08 294.98 737.67 296.28 741 297.1C744.33 297.92 745.83 298.15 750 298.6C754.17 299.05 760.00 299.78 766 299.8C772.00 299.82 780.33 299.02 786 298.7C791.67 298.38 794.90 298.32 800 297.9C805.10 297.48 811.60 296.72 816.6 296.2C821.60 295.68 825.93 295.23 830 294.8C834.07 294.37 836.83 293.92 841 293.6C845.17 293.28 850.83 293.10 855 292.9C859.17 292.70 861.83 292.40 866 292.4C870.17 292.40 874.33 292.68 880 292.9C885.67 293.12 893.83 293.42 900 293.7C906.17 293.98 910.08 294.18 917 294.6C923.92 295.02 933.17 295.70 941.5 296.2C949.83 296.70 958.92 297.33 967 297.6C975.08 297.87 984.50 297.82 990 297.8C995.50 297.78 995.50 297.68 1000 297.5C1004.50 297.32 1010.00 297.15 1017 296.7C1024.00 296.25 1033.67 295.32 1042 294.8C1050.33 294.28 1057.33 293.82 1067 293.6C1076.67 293.38 1091.67 293.50 1100 293.5C1108.33 293.50 1110.00 293.45 1117 293.6C1124.00 293.75 1133.67 293.97 1142 294.4C1150.33 294.83 1160.67 295.67 1167 296.2C1173.33 296.73 1174.50 297.20 1180 297.6C1185.50 298.00 1193.67 298.37 1200 298.6C1206.33 298.83 1210.83 299.10 1218 299C1225.17 298.90 1234.67 298.42 1243 298C1251.33 297.58 1259.67 297.42 1268 296.5C1276.33 295.58 1284.67 293.92 1293 292.5C1301.33 291.08 1311.67 289.28 1318 288C1324.33 286.72 1328.83 285.33 1331 284.8" stroke="#45a89a" stroke-width="1.4" fill="none"/><path d="M1243.5 152.8l4 4M1247.5 152.8l-4 4" stroke="#e84a4a" stroke-width="1"/></svg>
<div style="position:absolute;left:1155.6px;top:157.7px;white-space:nowrap;font-size:5.85px;line-height:10px;color:#444">Range: 530.000 - 570.000</div>
<div style="position:absolute;left:1155.6px;top:167.075px;white-space:nowrap;font-size:5.85px;line-height:10px;color:#444">T P-pol (45deg)</div>
<div style="position:absolute;left:1155.6px;top:176.45px;white-space:nowrap;font-size:5.85px;line-height:10px;color:#444">Maximum Value = 51.107 at 538.000</div>
<div style="position:absolute;left:1155.6px;top:185.825px;white-space:nowrap;font-size:5.85px;line-height:10px;color:#444">Minimum Value = 49.489 at 530.000</div>
<div style="position:absolute;left:1155.6px;top:195.2px;white-space:nowrap;font-size:5.85px;line-height:10px;color:#444">Average Value = 50.35</div>
<div style="position:absolute;left:1155.6px;top:204.575px;white-space:nowrap;font-size:5.85px;line-height:10px;color:#444">T S-pol (45deg)</div>
<div style="position:absolute;left:1155.6px;top:213.95px;white-space:nowrap;font-size:5.85px;line-height:10px;color:#444">Maximum Value = 50.212 at 569.000</div>
<div style="position:absolute;left:1155.6px;top:223.325px;white-space:nowrap;font-size:5.85px;line-height:10px;color:#444">Minimum Value = 49.24 at 543.000</div>
<div style="position:absolute;left:1155.6px;top:232.7px;white-space:nowrap;font-size:5.85px;line-height:10px;color:#444">Average Value = 49.728</div>
<div style="position:absolute;left:1155.6px;top:242.075px;white-space:nowrap;font-size:5.85px;line-height:10px;color:#444">T Mean-pol (45deg)</div>
<div style="position:absolute;left:1155.6px;top:251.45px;white-space:nowrap;font-size:5.85px;line-height:10px;color:#444">Maximum Value = 50.5 at 537.000</div>
<div style="position:absolute;left:1155.6px;top:260.825px;white-space:nowrap;font-size:5.85px;line-height:10px;color:#444">Minimum Value = 49.419 at 530.000</div>
<div style="position:absolute;left:1155.6px;top:270.2px;white-space:nowrap;font-size:5.85px;line-height:10px;color:#444">Average Value = 50.039</div>
<div style="position:absolute;left:1310.5px;top:89.2px;width:72px;height:47.2px;background:#fff;border:1px solid #d5dde6;border-radius:3px"></div>
<div style="position:absolute;left:1315px;top:91.5px;white-space:nowrap;font-weight:bold;font-size:6.5px;line-height:10px;color:#333">Legend</div>
<div style="position:absolute;left:1315px;top:104.7px;width:5px;height:5px;background:#1f9c86;border-radius:50%"></div>
<div style="position:absolute;left:1322.5px;top:102.2px;white-space:nowrap;font-size:6.3px;line-height:10px;color:#555">T P-pol (45deg)</div>
<div style="position:absolute;left:1315px;top:115.3px;width:5px;height:5px;background:#ff9a1f;border-radius:50%"></div>
<div style="position:absolute;left:1322.5px;top:112.8px;white-space:nowrap;font-size:6.3px;line-height:10px;color:#555">T S-pol (45deg)</div>
<div style="position:absolute;left:1315px;top:125.9px;width:5px;height:5px;background:#26bfd9;border-radius:50%"></div>
<div style="position:absolute;left:1322.5px;top:123.4px;white-space:nowrap;font-size:6.3px;line-height:10px;color:#555">T Mean-pol (45deg)</div>
<svg style="position:absolute;left:1029.5px;top:536px" width="8" height="8" viewBox="0 0 8 8"><path d="M1 4L4 1.2L7 4M1 7.5L4 4.7L7 7.5" stroke="#3a6fd8" stroke-width="1.2" fill="none"/></svg>
<svg style="position:absolute;left:1390px;top:309.5px" width="8" height="7.5" viewBox="0 0 8 7.5"><path d="M4 0.8L1 3.75L4 6.7M7.3 0.8L4.3 3.75L7.3 6.7" stroke="#3a6fd8" stroke-width="1.3" fill="none"/></svg>
</body></html>
